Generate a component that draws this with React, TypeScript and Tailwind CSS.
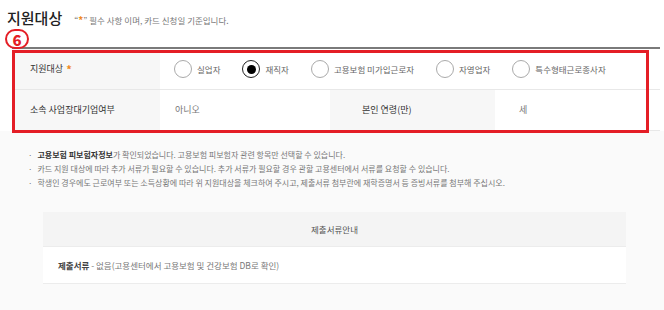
import React from "react";

const font = { fontFamily: '"Noto Sans CJK KR", "Noto Sans", sans-serif' };

function Radio({ label, checked }: { label: string; checked?: boolean }) {
  return (
    <div className="flex items-center gap-[5px]">
      <span
        className={
          "flex h-[18px] w-[18px] items-center justify-center rounded-full border bg-white " +
          (checked ? "border-[#222]" : "border-[#aaa]")
        }
      >
        {checked && <span className="h-[9px] w-[9px] rounded-full bg-black" />}
      </span>
      <span className="text-[8.5px] text-[#666]">{label}</span>
    </div>
  );
}

export default function App() {
  return (
    <div className="relative h-[310px] w-[664px] overflow-hidden bg-white" style={font}>
      {/* header */}
      <div className="flex h-[47px] items-start gap-[12px] pl-[7px] pt-[9px]">
        <span className="text-[15px] font-medium leading-[18px] text-[#222]">지원대상</span>
        <span className="pt-[5px] text-[8.5px] leading-[12px] text-[#777]">
          “<span className="text-[10px] font-bold text-[#f08a24]">*</span>” 필수 사항 이며, 카드 신청일 기준입니다.
        </span>
      </div>

      {/* table */}
      <div className="ml-[12px] w-[648px] border-t-2 border-[#7a7a7a]">
        <div className="flex h-[41px] border-b border-[#e8e8e8]">
          <div className="flex w-[148px] items-center bg-[#f7f7f7] pl-[18px] text-[9px] text-[#333]">
            지원대상 <span className="ml-[3px] text-[11px] font-bold text-[#f08a24]">*</span>
          </div>
          <div className="flex items-center gap-[22px] pl-[14px]">
            <Radio label="실업자" />
            <Radio label="재직자" checked />
            <Radio label="고용보험 미가입근로자" />
            <Radio label="자영업자" />
            <Radio label="특수형태근로종사자" />
          </div>
        </div>
        <div className="flex h-[41px] border-b border-[#e8e8e8]">
          <div className="flex w-[148px] items-center bg-[#f7f7f7] pl-[18px] text-[9px] text-[#333]">
            소속 사업장대기업여부
          </div>
          <div className="flex w-[170px] items-center pl-[15px] text-[9px] text-[#777]">아니오</div>
          <div className="flex w-[165px] items-center bg-[#f7f7f7] pl-[32px] text-[9px] text-[#333]">
            본인 연령(만)
          </div>
          <div className="flex items-center pl-[24px] text-[9px] text-[#777]">세</div>
        </div>
      </div>

      {/* notes area */}
      <div className="h-[180px] bg-[#fafafa] pt-[17px]">
        <ul className="flex flex-col gap-[1px] pl-[28px] text-[8px] leading-[13px] text-[#777]">
          <li className="flex gap-[5px]">
            <span>·</span>
            <span>
              <b className="font-bold text-[#333]">고용보험 피보험자정보</b>가 확인되었습니다. 고용보험 피보험자 관련 항목만 선택할 수 있습니다.
            </span>
          </li>
          <li className="flex gap-[5px]">
            <span>·</span>
            <span>카드 지원 대상에 따라 추가 서류가 필요할 수 있습니다. 추가 서류가 필요할 경우 관할 고용센터에서 서류를 요청할 수 있습니다.</span>
          </li>
          <li className="flex gap-[5px]">
            <span>·</span>
            <span>학생인 경우에도 근로여부 또는 소득상황에 따라 위 지원대상을 체크하여 주시고, 제출서류 첨부란에 재학증명서 등 증빙서류를 첨부해 주십시오.</span>
          </li>
        </ul>

        <div className="ml-[43px] mt-[23px] w-[583px]">
          <div className="flex h-[35px] items-center justify-center border-b border-[#ececec] bg-[#f4f4f4] text-[8.5px] text-[#555]">
            제출서류안내
          </div>
          <div className="flex h-[37px] items-center border-b border-[#ececec] bg-white pl-[15px] text-[8.5px] text-[#777]">
            <b className="font-bold text-[#444]">제출서류</b>&nbsp;- 없음(고용센터에서 고용보험 및 건강보험 DB로 확인)
          </div>
        </div>
      </div>

      {/* annotation: red box */}
      <div className="pointer-events-none absolute left-[12px] top-[50px] h-[83px] w-[637px] border-[3px] border-[#e41e26]" />
      {/* annotation: circled 6 */}
      <div className="absolute left-[5px] top-[29px] flex h-[20px] w-[24px] items-center justify-center rounded-full border-2 border-[#e41e26] bg-white text-[15px] font-extrabold leading-none text-[#e41e26]">
        6
      </div>
    </div>
  );
}
